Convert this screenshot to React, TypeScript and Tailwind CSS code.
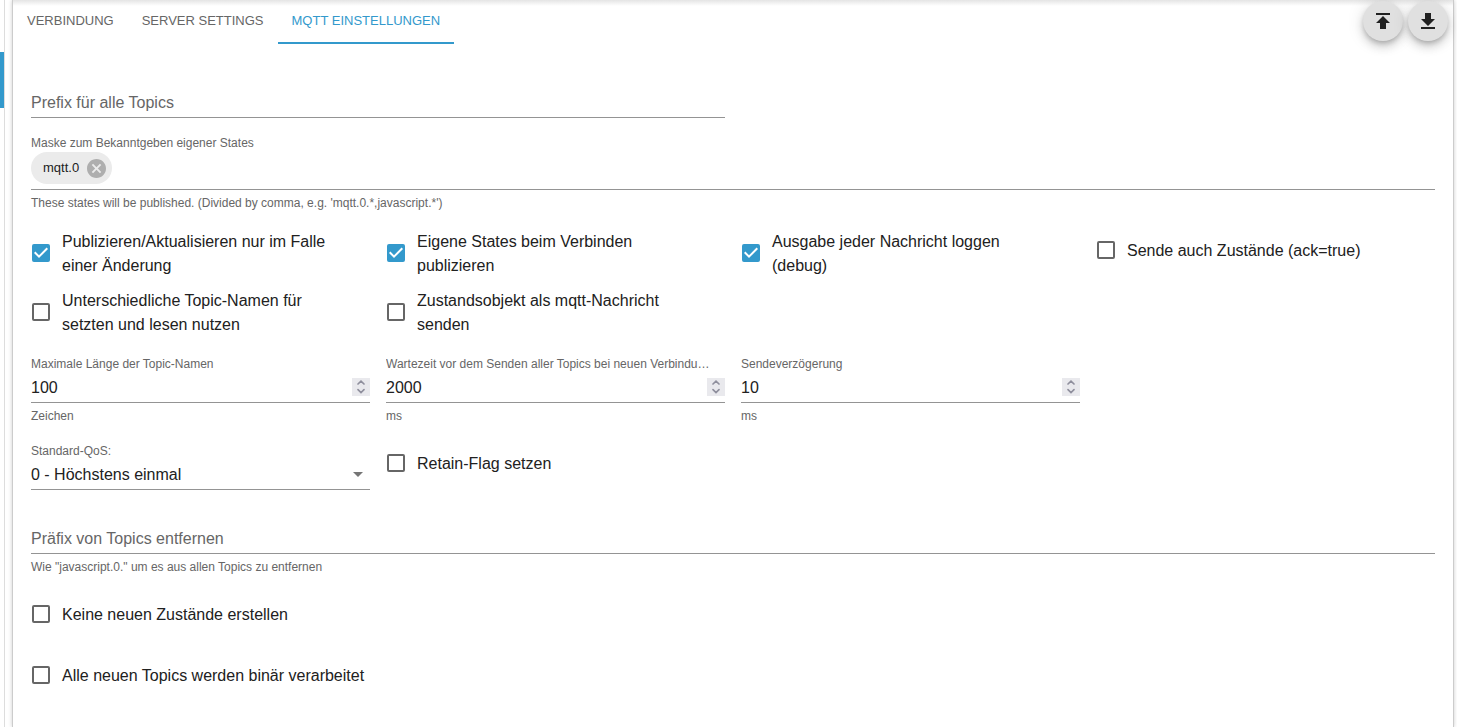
import { useId, useState } from "react";
import clsx from "clsx";

const tabs = ["VERBINDUNG", "SERVER SETTINGS", "MQTT EINSTELLUNGEN"];

function Checkbox({ label, defaultChecked = false }: { label: string; defaultChecked?: boolean }) {
  const [checked, setChecked] = useState(defaultChecked);

  return (
    <label className="flex min-h-[42px] cursor-pointer items-center gap-3 pr-6 text-base leading-6">
      <span className="relative mb-0.5 ml-px size-[18px] shrink-0">
        <input
          type="checkbox"
          checked={checked}
          onChange={(e) => setChecked(e.target.checked)}
          className="block size-[18px] cursor-pointer appearance-none rounded-xs border-2 border-[#666666] checked:border-[#3399cc] checked:bg-[#3399cc]"
        />
        {checked && (
          <svg viewBox="3 3 18 18" className="pointer-events-none absolute inset-0 size-[18px]">
            <path fill="#fff" d="M10 17l-5-5 1.41-1.41L10 14.17l7.59-7.59L19 8l-9 9z" />
          </svg>
        )}
      </span>
      {label}
    </label>
  );
}

function TextField({ label, helper }: { label: string; helper?: string }) {
  const id = useId();

  return (
    <div>
      <div className="relative border-b border-[#949494]">
        <input id={id} placeholder=" " className="peer block h-[31px] w-full text-base outline-none" />
        <label
          htmlFor={id}
          className="pointer-events-none absolute top-[5px] left-0 text-base leading-6 text-[#666666] peer-focus:-top-4 peer-focus:text-xs peer-[:not(:placeholder-shown)]:-top-4 peer-[:not(:placeholder-shown)]:text-xs"
        >
          {label}
        </label>
      </div>
      {helper && <Helper>{helper}</Helper>}
    </div>
  );
}

function Helper({ children }: { children: string }) {
  return <p className="mt-1 text-xs leading-[18px] text-[#666666]">{children}</p>;
}

function NumberField({ label, initial, unit }: { label: string; initial: number; unit: string }) {
  const id = useId();
  const [value, setValue] = useState(initial);

  return (
    <div className="min-w-0">
      <label htmlFor={id} className="block truncate pr-3 text-xs leading-4 text-[#666666]">
        {label}
      </label>
      <div className="flex h-[31px] items-center border-b border-[#949494]">
        <input
          id={id}
          type="number"
          value={value}
          onChange={(e) => setValue(Number(e.target.value))}
          className="min-w-0 flex-1 pt-0.5 text-base [appearance:textfield] outline-none [&::-webkit-inner-spin-button]:appearance-none"
        />
        <div className="flex size-[18px] flex-col bg-[#e9e9ed] text-[#8f8f9d]">
          <button type="button" aria-label="+" onClick={() => setValue(value + 1)}>
            <svg viewBox="0 0 18 9" className="block h-[9px] w-[18px]">
              <path d="M6 6 9 3.2 12 6" fill="none" stroke="currentColor" strokeWidth="1.7" strokeLinecap="round" />
            </svg>
          </button>
          <button type="button" aria-label="-" onClick={() => setValue(value - 1)}>
            <svg viewBox="0 0 18 9" className="block h-[9px] w-[18px]">
              <path d="M6 2.7 9 5.5 12 2.7" fill="none" stroke="currentColor" strokeWidth="1.7" strokeLinecap="round" />
            </svg>
          </button>
        </div>
      </div>
      <Helper>{unit}</Helper>
    </div>
  );
}

function RoundButton({ label, path }: { label: string; path: string }) {
  return (
    <button
      type="button"
      aria-label={label}
      className="grid size-10 place-items-center rounded-full bg-[#e0e0e0] shadow-[0_3px_5px_-1px_rgba(0,0,0,0.2),0_6px_10px_0_rgba(0,0,0,0.14),0_1px_18px_0_rgba(0,0,0,0.12)]"
    >
      <svg viewBox="0 0 24 24" className="size-6" fill="#212121">
        <path d={path} />
      </svg>
    </button>
  );
}

export default function App() {
  const [active, setActive] = useState(2);
  const [chips, setChips] = useState(["mqtt.0"]);

  return (
    <div className="flex min-h-screen bg-white font-['Liberation_Sans',Arial,sans-serif] text-[#212121]">
      <aside className="w-[5px] shrink-0 border-r border-[#dddddd] pt-[52px]">
        <div className="h-14 bg-[#3399cc]" />
      </aside>

      <main className="mr-[3px] ml-[7px] min-w-0 flex-1 border-x border-[#cccccc] shadow-[0_0_4px_rgba(0,0,0,0.2)]">
        <header className="flex items-start justify-between bg-linear-to-b from-[#e4e4e4] to-transparent to-[6px] pr-[5px]">
          <nav role="tablist" className="flex">
            {tabs.map((tab, i) => (
              <button
                key={tab}
                type="button"
                role="tab"
                aria-selected={active === i}
                onClick={() => setActive(i)}
                className={clsx(
                  "h-11 border-b-2 px-3.5 text-[13px] leading-10",
                  active === i ? "border-[#3399cc] text-[#3399cc]" : "border-transparent text-[#666666]",
                )}
              >
                {tab}
              </button>
            ))}
          </nav>
          <div className="flex gap-[5px] pt-px">
            <RoundButton label="Upload" path="M5 4v2h14V4H5zm0 10h4v6h6v-6h4l-7-7-7 7z" />
            <RoundButton label="Download" path="M5 20h14v-2H5v2zM19 10h-4V4H9v6H5l7 7 7-7z" />
          </div>
        </header>

        <form className="px-[18px] pt-[42px]" onSubmit={(e) => e.preventDefault()}>
          <div className="grid grid-cols-2 gap-4">
            <TextField label="Prefix für alle Topics" />
          </div>

          <div className="mt-4">
            <label htmlFor="mask" className="block text-xs leading-[18px] text-[#666666]">
              Maske zum Bekanntgeben eigener States
            </label>
            <div className="flex items-center border-b border-[#949494] pb-[5px]">
              {chips.map((chip) => (
                <span key={chip} className="flex h-8 items-center gap-2 rounded-full bg-[#ebebeb] pr-[6px] pl-3 text-[13px]">
                  {chip}
                  <button type="button" aria-label={chip} onClick={() => setChips(chips.filter((c) => c !== chip))}>
                    <svg viewBox="2 2 20 20" className="block size-[19px]" fill="#aeaeae">
                      <path d="M12 2C6.47 2 2 6.47 2 12s4.47 10 10 10 10-4.47 10-10S17.53 2 12 2zm5 13.59L15.59 17 12 13.41 8.41 17 7 15.59 10.59 12 7 8.41 8.41 7 12 10.59 15.59 7 17 8.41 13.41 12 17 15.59z" />
                    </svg>
                  </button>
                </span>
              ))}
              <input id="mask" className="h-8 min-w-0 flex-1 px-2 text-base outline-none" />
            </div>
            <Helper>These states will be published. (Divided by comma, e.g. 'mqtt.0.*,javascript.*')</Helper>
          </div>

          <div className="mt-[18px] grid grid-cols-4 items-start gap-x-4 gap-y-[11px]">
            <Checkbox label="Publizieren/Aktualisieren nur im Falle einer Änderung" defaultChecked />
            <Checkbox label="Eigene States beim Verbinden publizieren" defaultChecked />
            <Checkbox label="Ausgabe jeder Nachricht loggen (debug)" defaultChecked />
            <Checkbox label="Sende auch Zustände (ack=true)" />
            <Checkbox label="Unterschiedliche Topic-Namen für setzten und lesen nutzen" />
            <Checkbox label="Zustandsobjekt als mqtt-Nachricht senden" />
          </div>

          <div className="mt-[19px] grid grid-cols-4 gap-4">
            <NumberField label="Maximale Länge der Topic-Namen" initial={100} unit="Zeichen" />
            <NumberField
              label="Wartezeit vor dem Senden aller Topics bei neuen Verbindungen"
              initial={2000}
              unit="ms"
            />
            <NumberField label="Sendeverzögerung" initial={10} unit="ms" />
          </div>

          <div className="mt-[18px] grid grid-cols-4 items-start gap-4">
            <div>
              <label htmlFor="qos" className="block text-xs leading-4 text-[#666666]">
                Standard-QoS:
              </label>
              <div className="relative border-b border-[#949494]">
                <select id="qos" className="block h-[30px] w-full appearance-none pt-0.5 text-base outline-none">
                  <option>0 - Höchstens einmal</option>
                  <option>1 - Mindestens einmal</option>
                  <option>2 - Genau einmal</option>
                </select>
                <svg viewBox="0 0 24 24" className="pointer-events-none absolute top-[3px] right-0 size-6" fill="#757575">
                  <path d="M7 10l5 5 5-5z" />
                </svg>
              </div>
            </div>
            <Checkbox label="Retain-Flag setzen" />
          </div>

          <div className="mt-8">
            <TextField label="Präfix von Topics entfernen" helper={'Wie "javascript.0." um es aus allen Topics zu entfernen'} />
          </div>

          <div className="mt-[18px] flex flex-col items-start gap-[19px]">
            <Checkbox label="Keine neuen Zustände erstellen" />
            <Checkbox label="Alle neuen Topics werden binär verarbeitet" />
          </div>
        </form>
      </main>
    </div>
  );
}
